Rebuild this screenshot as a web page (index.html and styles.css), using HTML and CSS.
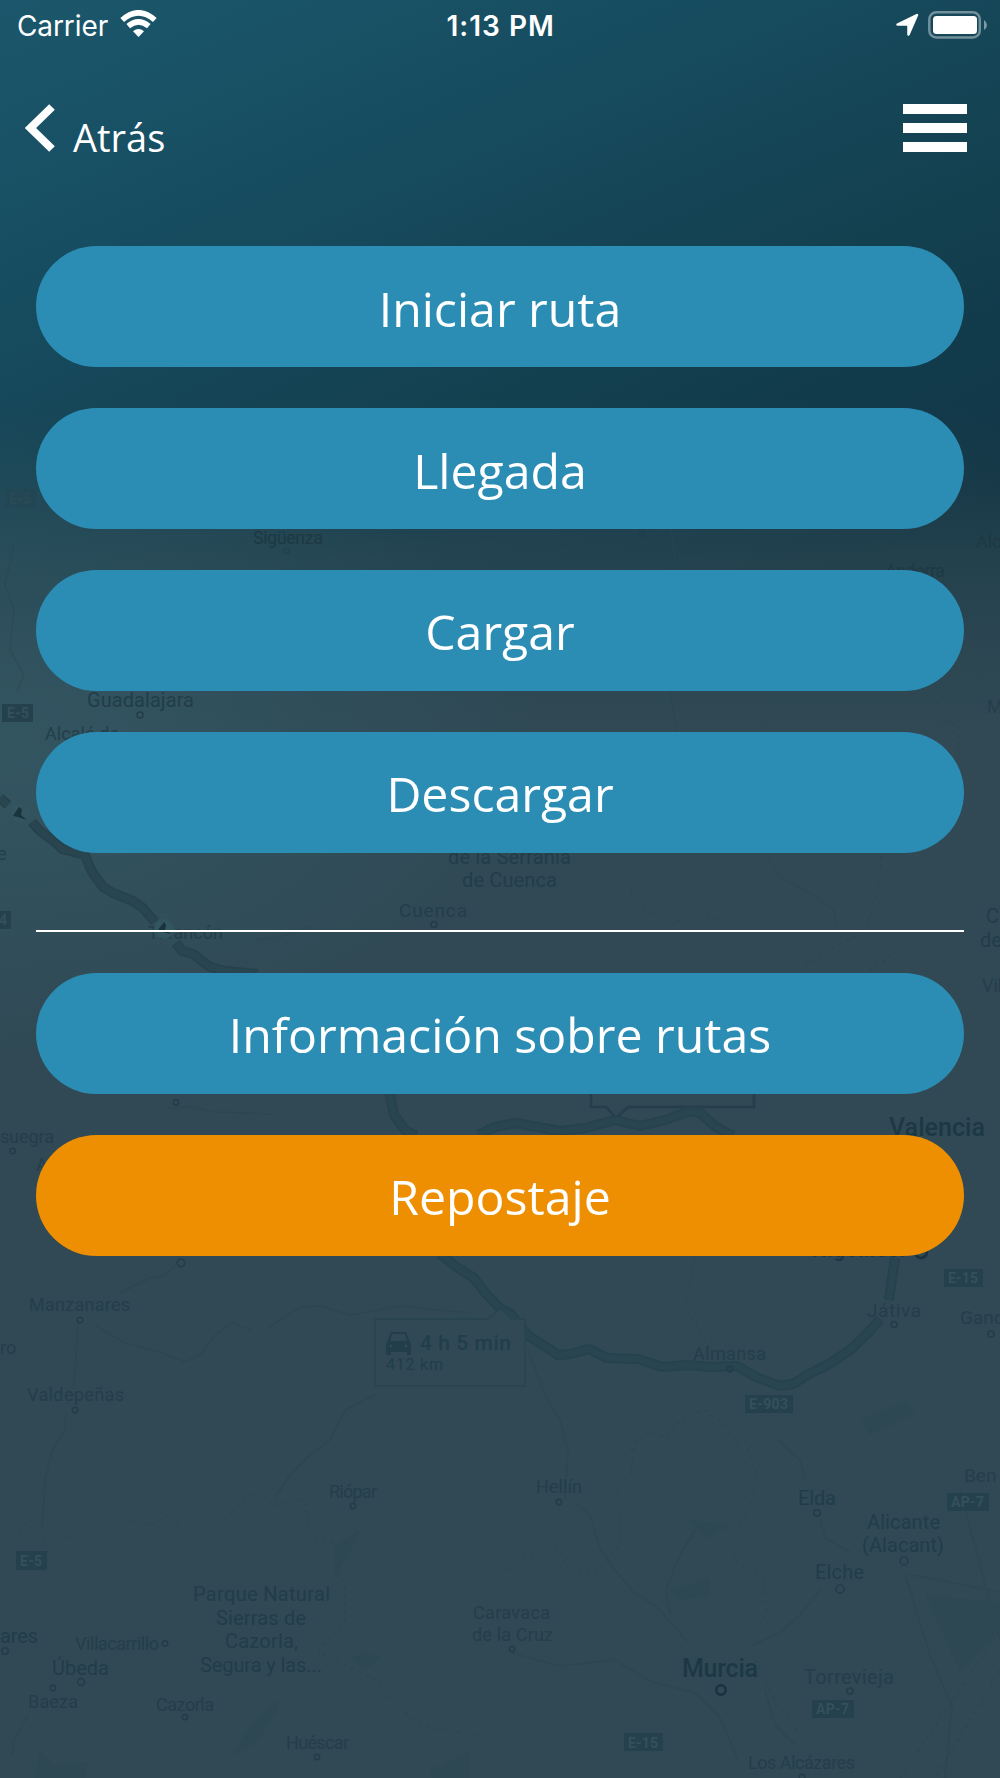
FILE: index.html
```
<!DOCTYPE html>
<html lang="es">
<head>
    <meta charset="UTF-8">
    <meta name="viewport" content="width=device-width, initial-scale=1.0">
    <title>Rutas</title>
    <link rel="stylesheet" href="styles.css">
</head>
<body>
    <svg class="map" viewBox="0 0 1000 1778" aria-hidden="true">
        <!-- carreteras secundarias -->
        <g class="minor">
            <path d="M765 855L782 878L812 894L833 909L838 930"/>
            <path d="M255 940L280 937L310 927M270 1114L215 1112L190 1107L168 1108"/>
            <path d="M120 1293L150 1278L165 1275L175 1266M78 1320L75 1375L73 1390"/>
            <path d="M95 1325L125 1343L160 1352L185 1362L200 1355L215 1335L232 1323L252 1330"/>
            <path d="M268 1328L300 1307L320 1306L350 1315L400 1306L470 1313"/>
            <path d="M528 1350L545 1395L560 1420L568 1450L565 1500M575 1503L590 1515L600 1548L615 1570L635 1594L655 1605L688 1642"/>
            <path d="M66 1412L65 1430L52 1450L45 1480L42 1530M375 1395L345 1410L330 1440L310 1455L290 1475L275 1498"/>
            <path d="M512 1653L560 1666L615 1660L650 1681L695 1693L720 1718L738 1760"/>
            <path d="M670 1614L666 1590L680 1555L695 1530M752 1645L780 1633L800 1615L820 1590M820 1518L825 1538L850 1552"/>
            <path d="M778 1440L800 1460L806 1482M765 1690L775 1725L795 1745M28 1715L14 1740L12 1755"/>
            <path d="M905 1575L930 1655L952 1705L945 1778M908 1574L1000 1592M960 1490L1000 1640"/>
            <path d="M14 545L5 585L14 610L10 650L24 675L17 692M545 490L555 530M668 500L675 560M670 690L680 750"/>
        </g>
        <g class="minor dashed">
            <path d="M0 1540L20 1540L22 1522L50 1542L70 1536L80 1512L110 1517L150 1525L170 1515L185 1535L200 1515L225 1518L253 1493L275 1505L305 1500L310 1538L333 1543L345 1590L345 1620L318 1652L375 1680L400 1710L430 1728L480 1735"/>
            <path d="M620 780L640 800L680 820M668 875L630 880L632 900L668 925L700 912L738 930M860 1010L870 970L900 950M882 840L880 880L866 930L830 950L800 970"/>
            <path d="M635 1440L630 1475L618 1490L620 1545L600 1570L570 1573L560 1550L520 1555L500 1577M745 1440L757 1475L750 1510L735 1530L735 1560L765 1580L766 1610L750 1650L775 1700L800 1735"/>
            <path d="M1000 1630L900 1778M1000 1670L935 1778M988 658L977 675L976 690L957 702L942 697L936 705L937 718L958 725L960 760"/>
            <path d="M695 1256L685 1305L710 1350M630 1450L650 1430L665 1438L685 1415L705 1410L725 1425L740 1450"/>
        </g>
        <g class="land">
            <path d="M350 1658L365 1652L382 1656L365 1670ZM250 1725L275 1700L278 1710L255 1745L232 1756ZM360 1530L345 1560L335 1580L335 1545ZM690 1520L730 1525L705 1540ZM670 1590L710 1578L710 1595L680 1600ZM860 1420L905 1400L915 1415L870 1435ZM40 1750L55 1765L88 1762L85 1778L35 1778ZM430 1770L470 1752L470 1778L432 1778ZM925 1595L1000 1602L1000 1630L960 1672Z"/>
        </g>

        <!-- rutas -->
        <path class="callout upper" d="M591 1080V1107H606L616 1118L628 1107H754V1080"/>
        <g class="route-edge">
            <path d="M0 798L8 805M32 822L40 831L55 842L62 849L85 855L92 872L103 887L113 893L133 901L143 908L155 922M176 943L182 951L193 954L210 967L225 971L258 974"/>
            <path d="M389 1090L394 1115L405 1130L416 1136M478 1135L495 1127L515 1123L560 1131L585 1128L615 1120L640 1126L665 1120L690 1111L700 1113L716 1127L733 1136"/>
            <path d="M440 1254L458 1268L474 1278L487 1295L501 1309L512 1315L527 1335L546 1347L558 1355L570 1354L589 1349L607 1358L638 1359L662 1367L687 1365L711 1367L737 1366L756 1377L780 1386L793 1384L809 1374L829 1364L850 1350L868 1333L880 1319M889 1300L895 1258"/>
        </g>
        <g class="route">
            <path d="M0 798L8 805M32 822L40 831L55 842L62 849L85 855L92 872L103 887L113 893L133 901L143 908L155 922M176 943L182 951L193 954L210 967L225 971L258 974"/>
            <path d="M389 1090L394 1115L405 1130L416 1136M478 1135L495 1127L515 1123L560 1131L585 1128L615 1120L640 1126L665 1120L690 1111L700 1113L716 1127L733 1136"/>
            <path d="M440 1254L458 1268L474 1278L487 1295L501 1309L512 1315L527 1335L546 1347L558 1355L570 1354L589 1349L607 1358L638 1359L662 1367L687 1365L711 1367L737 1366L756 1377L780 1386L793 1384L809 1374L829 1364L850 1350L868 1333L880 1319M889 1300L895 1258"/>
        </g>
        <!-- recuadro de tiempo -->
        <path class="callout" d="M375 1319H488L500 1308L512 1319H525V1386H375Z"/>
        <g class="car">
            <path fill-rule="evenodd" d="M391 1332H406L409 1340L411 1344V1355H407V1352H391V1355H386V1344L388 1340ZM392 1334L390 1341H407L405 1334Z"/>
            <circle cx="391" cy="1346" r="1.6"/>
            <circle cx="406" cy="1346" r="1.6"/>
        </g>
        <text class="strong" x="420" y="1350" font-size="21" textLength="91">4 h 5 min</text>
        <text class="strong light" x="386" y="1370" font-size="16" textLength="57">412 km</text>

        <g class="badges">
            <rect x="5" y="489" width="31" height="19" opacity=".35"/><rect x="2" y="704" width="31" height="18"/>
            <rect x="-20" y="911" width="31" height="18"/><rect x="944" y="1269" width="39" height="18"/>
            <rect x="745" y="1395" width="48" height="18"/><rect x="947" y="1493" width="42" height="18"/>
            <rect x="16" y="1551" width="31" height="19"/><rect x="812" y="1700" width="42" height="18"/>
            <rect x="624" y="1733" width="39" height="18"/>
            <text x="9" y="504" textLength="22" opacity=".4">E-5</text><text x="7" y="718" textLength="22">E-5</text>
            <text x="-1" y="925">4</text><text x="948" y="1283" textLength="30">E-15</text>
            <text x="749" y="1409" textLength="39">E-903</text><text x="951" y="1507" textLength="33">AP-7</text>
            <text x="20" y="1566" textLength="22">E-5</text><text x="816" y="1714" textLength="33">AP-7</text>
            <text x="628" y="1748" textLength="30">E-15</text>
        </g>

        <g class="towns">
            <text x="253" y="544" textLength="70" class="faded">Sigüenza</text>
            <text x="976" y="548" class="faded">Alc</text>
            <text x="885" y="577" textLength="60" class="faded">Andorra</text>
            <text x="45" y="740" textLength="74">Alcalá de</text>
            <text x="987" y="713">M</text>
            <text x="-3" y="860">e</text>
            <text x="399" y="917" textLength="68" font-size="19">Cuenca</text>
            <text x="148" y="939" textLength="75">Tarancón</text>
            <text x="982" y="992">Vil</text>
            <text x="-10" y="1143" textLength="64">nsuegra</text>
            <text x="36" y="1171">A</text>
            <text x="867" y="1317" textLength="54" font-size="19">Játiva</text>
            <text x="960" y="1324" font-size="19">Gand</text>
            <text x="693" y="1360" textLength="73">Almansa</text>
            <text x="29" y="1311" textLength="101">Manzanares</text>
            <text x="0" y="1354">ro</text>
            <text x="27" y="1401" textLength="97">Valdepeñas</text>
            <text x="536" y="1493" textLength="46">Hellín</text>
            <text x="329" y="1498" textLength="48">Riópar</text>
            <text x="964" y="1482" font-size="19">Ben</text>
            <text x="75" y="1650" textLength="84">Villacarrillo</text>
            <text x="28" y="1708" textLength="50">Baeza</text>
            <text x="156" y="1711" textLength="58">Cazorla</text>
            <text x="286" y="1749" textLength="63">Huéscar</text>
            <text x="473" y="1619" textLength="77">Caravaca</text>
            <text x="472" y="1641" textLength="81">de la Cruz</text>
            <text x="804" y="1684" textLength="90" font-size="20">Torrevieja</text>
            <text x="748" y="1769" textLength="107">Los Alcázares</text>
        </g>
        <g class="towns big">
            <text x="87" y="707" textLength="107">Guadalajara</text>
            <text x="448" y="864" textLength="123">de la Serranía</text>
            <text x="462" y="887" textLength="95">de Cuenca</text>
            <text x="986" y="923">C</text>
            <text x="980" y="947">de</text>
            <text x="798" y="1505" textLength="38">Elda</text>
            <text x="867" y="1529" textLength="73">Alicante</text>
            <text x="862" y="1552" textLength="82">(Alacant)</text>
            <text x="815" y="1579" textLength="49">Elche</text>
            <text x="193" y="1601" textLength="137">Parque Natural</text>
            <text x="216" y="1625" textLength="90">Sierras de</text>
            <text x="225" y="1648" textLength="73">Cazorla,</text>
            <text x="200" y="1672" textLength="122">Segura y las...</text>
            <text x="0" y="1643" textLength="38">ares</text>
            <text x="52" y="1675" textLength="57">Úbeda</text>
        </g>
        <g class="towns city">
            <text x="889" y="1136" textLength="96">Valencia</text>
            <text x="682" y="1677" textLength="76">Murcia</text>
            <text x="813" y="1257" textLength="92" font-size="19" font-weight="700">Algemesí</text>
        </g>

        <g class="works">
            <circle cx="21" cy="813" r="10"/>
            <circle cx="164" cy="929" r="10"/>
            <path d="M13 816L19 807L22 809L21 815L27 820L18 817ZM158 930L164 922L166 925L165 930L172 934L162 932Z"/>
        </g>

        <g class="dots">
            <circle cx="287" cy="551" r="2.5" opacity=".6"/><circle cx="641" cy="533" r="2.5" opacity=".6"/>
            <circle cx="140" cy="715" r="3"/><circle cx="434" cy="924.5" r="3"/>
            <circle cx="176" cy="1102.5" r="2.7"/><circle cx="12.6" cy="1151" r="2.7"/>
            <circle cx="181" cy="1263" r="3.8"/><circle cx="894" cy="1324.5" r="3"/>
            <circle cx="991" cy="1334" r="3"/><circle cx="730" cy="1369" r="2.7"/>
            <circle cx="80" cy="1320" r="2.7"/><circle cx="75" cy="1410" r="2.7"/>
            <circle cx="559" cy="1502" r="2.7"/><circle cx="353" cy="1506" r="2.7"/>
            <circle cx="817" cy="1513" r="3.2"/><circle cx="904" cy="1561" r="4"/>
            <circle cx="840" cy="1589" r="4"/><circle cx="5" cy="1651" r="3.2"/>
            <circle cx="165" cy="1643.5" r="2.7"/><circle cx="81" cy="1682" r="3.5"/>
            <circle cx="53" cy="1688" r="2.7"/><circle cx="185" cy="1717" r="2.7"/>
            <circle cx="317" cy="1757" r="2.7"/><circle cx="512" cy="1649" r="2.7"/>
            <circle class="capital" cx="721" cy="1690" r="4.7"/><circle cx="850" cy="1691" r="3"/>
            <circle cx="802" cy="1777" r="2.7"/>
            <circle class="capital" cx="921" cy="1252" r="6"/>
        </g>
    </svg>

    <div class="screen">
        <div class="status-bar">
            <div class="status-left">
                <span class="carrier">Carrier</span>
                <svg class="wifi" width="37" height="28" viewBox="0 0 37 28">
                    <path d="M18.5 27L13 21.3Q18.5 16.8 24 21.3Z"/>
                    <path class="arc" d="M8.2 16.2Q18.5 7.6 28.8 16.2"/>
                    <path class="arc" d="M2.2 10Q18.5 -4.4 34.8 10"/>
                </svg>
            </div>
            <span class="clock">1:13 PM</span>
            <div class="status-right">
                <svg width="24" height="24" viewBox="0 0 24 24">
                    <path class="arrow" d="M22 2L13.5 21.5V11.5H2.5Z"/>
                </svg>
                <svg class="battery" width="60" height="28" viewBox="0 0 60 28">
                    <rect class="shell" x="1.3" y="1.3" width="50.5" height="25.2" rx="7"/>
                    <rect x="5" y="5" width="44" height="18" rx="3.5"/>
                    <path class="tip" d="M56 9Q59 11 59 14Q59 17 56 19Z"/>
                </svg>
            </div>
        </div>

        <div class="header">
            <a class="back">
                <svg width="30" height="48" viewBox="0 0 30 48">
                    <path d="M27 3L5.5 24L27 45"/>
                </svg>
                <span>Atrás</span>
            </a>
            <div class="menu">
                <i></i>
                <i></i>
                <i></i>
            </div>
        </div>

        <div class="buttons">
            <button>Iniciar ruta</button>
            <button>Llegada</button>
            <button>Cargar</button>
            <button>Descargar</button>
            <hr>
            <button>Información sobre rutas</button>
            <button class="orange">Repostaje</button>
        </div>
    </div>
</body>
</html>
```
FILE: styles.css
```
:root {
    --blue: #2b8db3;
    --orange: #ed8f00;
    --map-ink: #213e4a;
}

* {
    box-sizing: border-box;
}

body {
    margin: 0;
    height: 1778px;
    position: relative;
    overflow: hidden;
    color: #fff;
    font-family: 'Open Sans', sans-serif;
    background:
        radial-gradient(ellipse 540px 320px at 0 740px, rgba(52, 92, 104, 0.65), rgba(50, 90, 104, 0.38) 50%, rgba(48, 88, 104, 0) 100%),
        linear-gradient(to bottom, rgba(48, 73, 84, 0) 400px, rgba(48, 73, 84, 0.22) 470px, rgba(48, 73, 84, 0.6) 560px, rgba(48, 73, 84, 0.9) 660px, #304954 740px),
        linear-gradient(157deg, #1b576c 0, #174d61 260px, #13404f 560px, #11394a 740px, #0f3443 850px, #0f3444 100%);
}

/* Map */
.map {
    position: absolute;
    top: 0;
    left: 0;
    width: 1000px;
    height: 1778px;
    font-family: Roboto, sans-serif;
}

.minor {
    fill: none;
    stroke: #2b4650;
    stroke-width: 1.5;
    opacity: 0.5;
}

.dashed {
    stroke-dasharray: 3 5;
}

.land {
    fill: #2c4852;
    opacity: 0.4;
}

.route,
.route-edge {
    fill: none;
    stroke: #294650;
    stroke-width: 6.5;
    stroke-linejoin: round;
}

.route-edge {
    stroke: #25424d;
    stroke-width: 10;
}

.works circle {
    fill: #325560;
}

.works path {
    fill: #17343f;
}

.callout {
    fill: #304954;
    stroke: #294550;
    stroke-width: 1.8;
}

.upper {
    stroke: #243f4b;
    stroke-width: 2.5;
}

.car path,
.strong {
    fill: var(--map-ink);
}

.car circle {
    fill: #304954;
}

.strong {
    font-weight: 500;
}

.light {
    font-weight: 400;
}

.badges rect {
    fill: #25414d;
}

.badges text {
    fill: #34505c;
    font-size: 14px;
    font-weight: 700;
}

.towns {
    fill: #243e4b;
    font-size: 18px;
}

.faded {
    fill: #1e3944;
}

.big {
    fill: #223d4a;
    font-size: 20px;
}

.city {
    fill: #1d3845;
    font-size: 25px;
    font-weight: 500;
}

.dots circle {
    fill: none;
    stroke: #223d49;
    stroke-width: 1.5;
}

.dots .capital {
    stroke: #193440;
    stroke-width: 2.5;
}

/* Status bar */
.screen {
    position: relative;
}

.status-bar {
    height: 51px;
    padding: 0 12px 0 17px;
    display: grid;
    grid-template-columns: 1fr 110px 1fr;
    align-items: center;
    font-family: Inter, sans-serif;
    font-size: 28px;
}

.status-left,
.status-right {
    display: flex;
    align-items: center;
}

.status-left {
    gap: 12px;
}

.carrier {
    letter-spacing: -0.1px;
}

.wifi {
    fill: #fff;
    margin-bottom: 3px;
}

.wifi .arc {
    fill: none;
    stroke: #fff;
    stroke-width: 5.5;
}

.clock {
    margin-left: -1px;
    font-size: 28px;
    font-weight: 600;
    letter-spacing: 1px;
    white-space: nowrap;
}

.status-right {
    justify-content: flex-end;
    gap: 9px;
    padding-bottom: 1px;
    fill: #fff;
}

.arrow {
    stroke: #fff;
    stroke-width: 2.5;
    stroke-linejoin: round;
}

.battery .shell {
    fill: none;
    stroke: rgba(255, 255, 255, 0.4);
    stroke-width: 2.5;
}

.battery .tip {
    fill: rgba(255, 255, 255, 0.45);
}

/* Header */
.header {
    height: 195px;
    padding: 53px 33px 0 25px;
    display: flex;
    justify-content: space-between;
    align-items: flex-start;
}

.back {
    display: flex;
    gap: 18px;
    font-size: 38px;
    line-height: 67px;
}

.back path {
    fill: none;
    stroke: #fff;
    stroke-width: 8;
}

.menu {
    display: flex;
    flex-direction: column;
    gap: 9px;
}

.menu i {
    width: 64px;
    height: 10px;
    background: #fff;
}

/* Buttons */
.buttons {
    padding: 0.4px 36px 0;
    display: flex;
    flex-direction: column;
    gap: 41px;
}

button {
    height: 120.8px;
    padding: 2px 0 0;
    border: 0;
    border-radius: 61px;
    background: var(--blue);
    color: #fff;
    font-family: inherit;
    font-size: 48.2px;
}

.orange {
    background: var(--orange);
}

hr {
    width: 100%;
    height: 2px;
    margin: 36.5px 0 0;
    border: 0;
    background: #fff;
}
```
